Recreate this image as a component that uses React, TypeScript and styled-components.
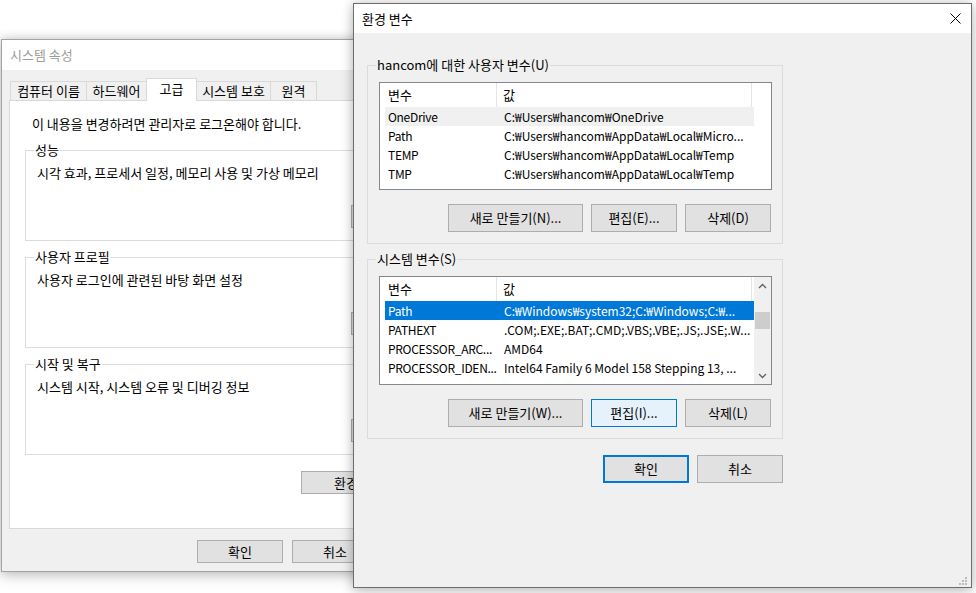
import React from 'react';
import styled, { createGlobalStyle } from 'styled-components';

const GlobalStyle = createGlobalStyle`
  html, body { margin: 0; padding: 0; background: #ffffff; }
  body {
    font-family: "Noto Sans CJK KR", "Noto Sans", sans-serif;
    font-size: 13px;
    color: #000;
  }
  * { box-sizing: border-box; }
`;

const Desktop = styled.div`
  position: relative;
  width: 976px;
  height: 593px;
  overflow: hidden;
  background: #ffffff;
`;

const Window = styled.div<{ $x: number; $y: number; $w: number; $h: number; $z: number; $active?: boolean }>`
  position: absolute;
  left: ${p => p.$x}px;
  top: ${p => p.$y}px;
  z-index: ${p => p.$z};
  width: ${p => p.$w}px;
  height: ${p => p.$h}px;
  display: flex;
  flex-direction: column;
  background: #f0f0f0;
  border: 1px solid ${p => (p.$active ? '#6d6d6d' : '#a3a3a3')};
  box-shadow: 0 0 10px rgba(0, 0, 0, 0.2), 0 5px 14px rgba(0, 0, 0, 0.14);
`;

const TitleBar = styled.div<{ $h: number; $inactive?: boolean }>`
  flex: none;
  height: ${p => p.$h}px;
  display: flex;
  align-items: center;
  justify-content: space-between;
  padding-left: 8px;
  background: #ffffff;
  color: ${p => (p.$inactive ? '#9c9c9c' : '#000000')};
  line-height: 16px;
`;

const CloseGlyph = styled.svg`
  width: 11px;
  height: 11px;
  margin-right: 10px;
`;

/* ---------- left window: 시스템 속성 ---------- */

const PropsBody = styled.div`
  flex: 1;
  display: flex;
  flex-direction: column;
  padding: 8px 8px 0 7px;
`;

const TabStrip = styled.div`
  display: flex;
  align-items: flex-end;
  height: 22px;
  margin-left: 1px;
`;

const Tab = styled.div<{ $w: number; $selected?: boolean }>`
  position: relative;
  width: ${p => p.$w}px;
  height: ${p => (p.$selected ? 23 : 19)}px;
  margin-right: -1px;
  margin-bottom: ${p => (p.$selected ? -1 : 0)}px;
  z-index: ${p => (p.$selected ? 2 : 0)};
  display: flex;
  align-items: center;
  justify-content: center;
  padding: 0 0 ${p => (p.$selected ? 3 : 0)}px 0;
  background: ${p => (p.$selected ? '#ffffff' : '#f0f0f0')};
  border: 1px solid #d9d9d9;
  border-bottom: none;
  white-space: nowrap;
  line-height: 16px;
`;

const TabPanel = styled.div`
  position: relative;
  z-index: 1;
  height: 429px;
  display: flex;
  flex-direction: column;
  padding: 0 15px;
  background: #ffffff;
  border: 1px solid #d9d9d9;
`;

const Notice = styled.div`
  margin: 15px 0 0 7px;
  line-height: 16px;
  white-space: nowrap;
`;

const Group = styled.div<{ $bg: string; $h: number; $mt: number }>`
  flex: none;
  display: flex;
  flex-direction: column;
  height: ${p => p.$h}px;
  margin-top: ${p => p.$mt}px;
  border: 1px solid #dcdcdc;
  background: ${p => p.$bg};
`;

const Legend = styled.div`
  align-self: flex-start;
  margin: -9px 0 0 8px;
  padding: 0 1px;
  line-height: 16px;
  background: inherit;
  white-space: nowrap;
`;

const GroupText = styled.div`
  margin: 7px 0 0 11px;
  line-height: 16px;
  white-space: nowrap;
`;

const Button = styled.button<{ $w: number; $h: number; $kind?: 'focus' | 'default' }>`
  flex: none;
  width: ${p => p.$w}px;
  height: ${p => p.$h}px;
  padding: 0;
  font-family: inherit;
  font-size: 13px;
  line-height: 16px;
  color: #000;
  white-space: nowrap;
  overflow: hidden;
  background: ${p => (p.$kind === 'focus' ? '#e5f1fb' : '#e1e1e1')};
  border: ${p => (p.$kind === 'default' ? '2px solid #0078d7' : p.$kind === 'focus' ? '1px solid #0078d7' : '1px solid #adadad')};
`;

const GroupButtonSlot = styled.div`
  display: flex;
  justify-content: flex-end;
  margin: 24px 10px 0 0;
`;

const EnvButtonRow = styled.div`
  display: flex;
  justify-content: flex-end;
  margin: 16px 11px 0 0;
`;

const DialogButtons = styled.div<{ $gap: number; $mt: number; $pr: number }>`
  display: flex;
  justify-content: flex-end;
  gap: ${p => p.$gap}px;
  margin-top: ${p => p.$mt}px;
  padding-right: ${p => p.$pr}px;
`;

/* ---------- right window: 환경 변수 ---------- */

const EnvBody = styled.div`
  flex: 1;
  display: flex;
  flex-direction: column;
  width: 429px;
  padding: 32px 0 0 13px;
`;

const VarGroupInner = styled.div`
  display: flex;
  flex-direction: column;
  padding: 9px 10px 0 11px;
`;

const ListBox = styled.div<{ $h: number }>`
  display: flex;
  height: ${p => p.$h}px;
  border: 1px solid #828790;
  background: #ffffff;
`;

const ListContent = styled.div`
  flex: 1;
  padding-left: 5px;
  overflow: hidden;
`;

const HeaderRow = styled.div`
  display: grid;
  grid-template-columns: 112px 255px;
  height: 24px;
`;

const HeaderCell = styled.div<{ $pl: number }>`
  display: flex;
  align-items: center;
  padding-left: ${p => p.$pl}px;
  border-right: 1px solid #e5e5e5;
  line-height: 16px;
`;

const Row = styled.div<{ $state?: 'selected' | 'hover' }>`
  display: grid;
  grid-template-columns: 112px 255px;
  height: 19px;
  align-items: center;
  font-size: 12px;
  background: ${p => (p.$state === 'selected' ? '#0078d7' : p.$state === 'hover' ? '#f0f0f0' : 'transparent')};
  color: ${p => (p.$state === 'selected' ? '#ffffff' : '#000000')};
`;

const Cell = styled.div<{ $pl: number; $tight?: boolean }>`
  padding-left: ${p => p.$pl}px;
  line-height: 16px;
  letter-spacing: ${p => (p.$tight ? '-0.3px' : 'normal')};
  white-space: nowrap;
  overflow: hidden;
`;

const ScrollBar = styled.div<{ $bg: string }>`
  flex: none;
  width: 17px;
  display: flex;
  flex-direction: column;
  background: ${p => p.$bg};
`;

const ScrollArrow = styled.div`
  height: 17px;
  display: flex;
  align-items: center;
  justify-content: center;
`;

const ScrollTrack = styled.div`
  flex: 1;
  display: flex;
  flex-direction: column;
  align-items: center;
`;

const ScrollThumb = styled.div`
  width: 15px;
  height: 17px;
  background: #cdcdcd;
`;

const ButtonRow = styled.div<{ $mt: number }>`
  display: flex;
  justify-content: flex-end;
  gap: 8px;
  margin-top: ${p => p.$mt}px;
  padding-right: 1px;
`;

const Grip = styled.svg`
  position: absolute;
  right: 4px;
  bottom: 0;
  width: 10px;
  height: 10px;
`;

type Var = { name: string; value: string; state?: 'selected' | 'hover' };

const userVars: Var[] = [
  { name: 'OneDrive', value: 'C:₩Users₩hancom₩OneDrive', state: 'hover' },
  { name: 'Path', value: 'C:₩Users₩hancom₩AppData₩Local₩Micro...' },
  { name: 'TEMP', value: 'C:₩Users₩hancom₩AppData₩Local₩Temp' },
  { name: 'TMP', value: 'C:₩Users₩hancom₩AppData₩Local₩Temp' },
];

const systemVars: Var[] = [
  { name: 'Path', value: 'C:₩Windows₩system32;C:₩Windows;C:₩...', state: 'selected' },
  { name: 'PATHEXT', value: '.COM;.EXE;.BAT;.CMD;.VBS;.VBE;.JS;.JSE;.W...' },
  { name: 'PROCESSOR_ARC...', value: 'AMD64' },
  { name: 'PROCESSOR_IDEN...', value: 'Intel64 Family 6 Model 158 Stepping 13, ...' },
];

const Chevron = ({ up }: { up?: boolean }) => (
  <svg width="9" height="6" viewBox="0 0 9 6">
    <path
      d={up ? 'M1 5 L4.5 1.5 L8 5' : 'M1 1 L4.5 4.5 L8 1'}
      fill="none"
      stroke="#606060"
      strokeWidth="1.3"
    />
  </svg>
);

const VarList = ({ vars, height, scroll, thumbTop = 0 }: { vars: Var[]; height: number; scroll?: boolean; thumbTop?: number }) => (
  <ListBox $h={height}>
    <ListContent>
      <HeaderRow>
        <HeaderCell $pl={3}>변수</HeaderCell>
        <HeaderCell $pl={6}>값</HeaderCell>
      </HeaderRow>
      {vars.map(v => (
        <Row key={v.name} $state={v.state}>
          <Cell $pl={3} $tight>{v.name}</Cell>
          <Cell $pl={7}>{v.value}</Cell>
        </Row>
      ))}
    </ListContent>
    {scroll ? (
      <ScrollBar $bg="#f0f0f0">
        <ScrollArrow><Chevron up /></ScrollArrow>
        <ScrollTrack>
          <ScrollThumb style={{ marginTop: thumbTop }} />
        </ScrollTrack>
        <ScrollArrow><Chevron /></ScrollArrow>
      </ScrollBar>
    ) : (
      <ScrollBar $bg="#ffffff" />
    )}
  </ListBox>
);

const perfGroups = [
  { title: '성능', text: '시각 효과, 프로세서 일정, 메모리 사용 및 가상 메모리', mt: 18 },
  { title: '사용자 프로필', text: '사용자 로그인에 관련된 바탕 화면 설정', mt: 16 },
  { title: '시작 및 복구', text: '시스템 시작, 시스템 오류 및 디버깅 정보', mt: 16 },
];

export default function App() {
  return (
    <>
      <GlobalStyle />
      <Desktop>
        <Window $x={1} $y={39} $w={482} $h={533} $z={1}>
          <TitleBar $h={30} $inactive>시스템 속성</TitleBar>
          <PropsBody>
            <TabStrip>
              <Tab $w={77}>컴퓨터 이름</Tab>
              <Tab $w={61}>하드웨어</Tab>
              <Tab $w={51} $selected>고급</Tab>
              <Tab $w={75}>시스템 보호</Tab>
              <Tab $w={47}>원격</Tab>
            </TabStrip>
            <TabPanel>
              <Notice>이 내용을 변경하려면 관리자로 로그온해야 합니다.</Notice>
              {perfGroups.map(g => (
                <Group key={g.title} $bg="#ffffff" $h={91} $mt={g.mt}>
                  <Legend>{g.title}</Legend>
                  <GroupText>{g.text}</GroupText>
                  <GroupButtonSlot>
                    <Button $w={96} $h={23}>설정(S)...</Button>
                  </GroupButtonSlot>
                </Group>
              ))}
              <EnvButtonRow>
                <Button $w={146} $h={23}>환경 변수(N)...</Button>
              </EnvButtonRow>
            </TabPanel>
            <DialogButtons $gap={9} $mt={11} $pr={1}>
              <Button $w={86} $h={23}>확인</Button>
              <Button $w={86} $h={23}>취소</Button>
              <Button $w={86} $h={23}>적용(A)</Button>
            </DialogButtons>
          </PropsBody>
        </Window>

        <Window $x={353} $y={3} $w={619} $h={585} $z={2} $active>
          <TitleBar $h={29}>
            환경 변수
            <CloseGlyph viewBox="0 0 11 11">
              <path d="M0.5 0.5 L10.5 10.5 M10.5 0.5 L0.5 10.5" stroke="#000" strokeWidth="1" fill="none" />
            </CloseGlyph>
          </TitleBar>
          <EnvBody>
            <Group $bg="#f0f0f0" $h={179} $mt={0}>
              <Legend>hancom에 대한 사용자 변수(U)</Legend>
              <VarGroupInner>
                <VarList vars={userVars} height={108} />
                <ButtonRow $mt={14}>
                  <Button $w={135} $h={28}>새로 만들기(N)...</Button>
                  <Button $w={86} $h={28}>편집(E)...</Button>
                  <Button $w={86} $h={28}>삭제(D)</Button>
                </ButtonRow>
              </VarGroupInner>
            </Group>
            <Group $bg="#f0f0f0" $h={180} $mt={15}>
              <Legend>시스템 변수(S)</Legend>
              <VarGroupInner>
                <VarList vars={systemVars} height={109} scroll thumbTop={18} />
                <ButtonRow $mt={14}>
                  <Button $w={135} $h={28}>새로 만들기(W)...</Button>
                  <Button $w={86} $h={28} $kind="focus">편집(I)...</Button>
                  <Button $w={86} $h={28}>삭제(L)</Button>
                </ButtonRow>
              </VarGroupInner>
            </Group>
            <DialogButtons $gap={8} $mt={16} $pr={0}>
              <Button $w={86} $h={28} $kind="default">확인</Button>
              <Button $w={86} $h={28}>취소</Button>
            </DialogButtons>
          </EnvBody>
          <Grip viewBox="0 0 10 10">
            <rect x="8" y="0" width="2" height="2" fill="#bcbcbc" />
            <rect x="5" y="3" width="2" height="2" fill="#bcbcbc" />
            <rect x="8" y="3" width="2" height="2" fill="#bcbcbc" />
            <rect x="2" y="6" width="2" height="2" fill="#bcbcbc" />
            <rect x="5" y="6" width="2" height="2" fill="#bcbcbc" />
            <rect x="8" y="6" width="2" height="2" fill="#bcbcbc" />
          </Grip>
        </Window>
      </Desktop>
    </>
  );
}
